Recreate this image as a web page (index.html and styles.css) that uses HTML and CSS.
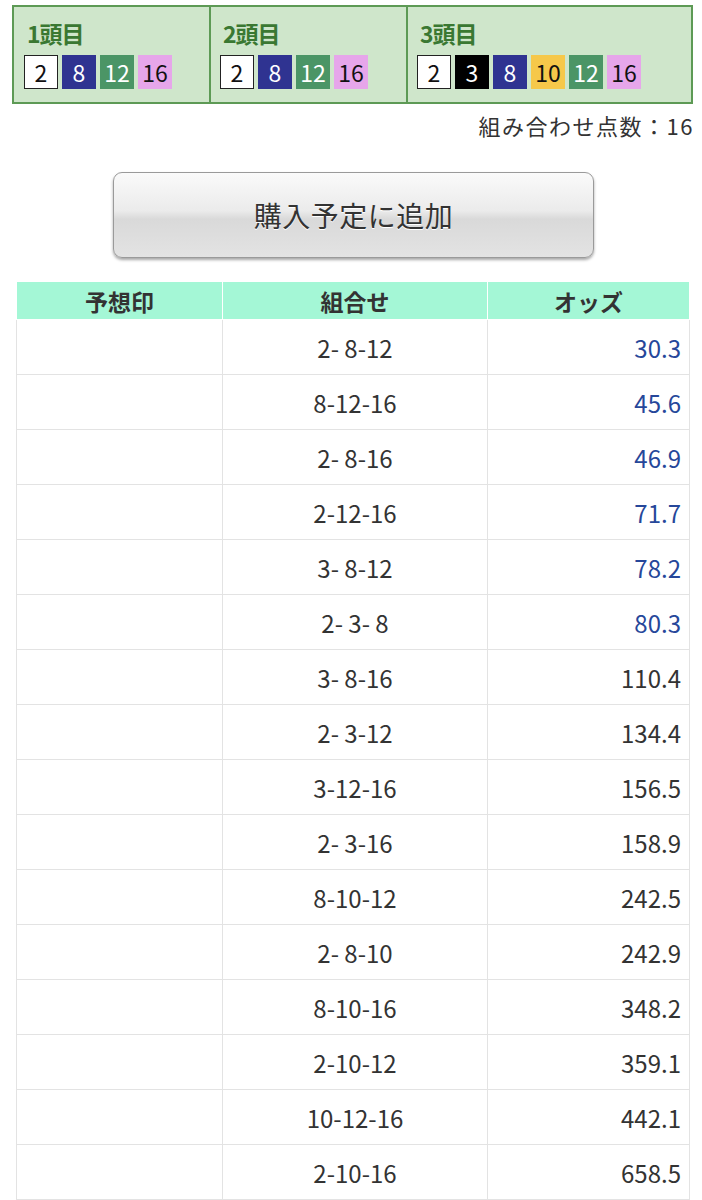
FILE: index.html
```html
<!DOCTYPE html>
<html lang="ja">
<head>
<meta charset="utf-8">
<title>組合せ</title>
<link rel="stylesheet" href="styles.css">
</head>
<body>
<div class="page">
  <div class="picks">
    <div class="pick">
      <div class="pick-title">1頭目</div>
      <div class="badges">
        <span class="b w">2</span><span class="b n">8</span><span class="b g">12</span><span class="b p">16</span>
      </div>
    </div>
    <div class="pick">
      <div class="pick-title">2頭目</div>
      <div class="badges">
        <span class="b w">2</span><span class="b n">8</span><span class="b g">12</span><span class="b p">16</span>
      </div>
    </div>
    <div class="pick">
      <div class="pick-title">3頭目</div>
      <div class="badges">
        <span class="b w">2</span><span class="b k">3</span><span class="b n">8</span><span class="b y">10</span><span class="b g">12</span><span class="b p">16</span>
      </div>
    </div>
  </div>
  <div class="count">組み合わせ点数：16</div>
  <div class="btn-wrap"><button class="btn">購入予定に追加</button></div>
  <table class="odds">
    <thead>
      <tr><th class="c1">予想印</th><th class="c2">組合せ</th><th class="c3">オッズ</th></tr>
    </thead>
    <tbody>
      <tr><td></td><td class="combo">2- 8-12</td><td class="num blue">30.3</td></tr>
      <tr><td></td><td class="combo">8-12-16</td><td class="num blue">45.6</td></tr>
      <tr><td></td><td class="combo">2- 8-16</td><td class="num blue">46.9</td></tr>
      <tr><td></td><td class="combo">2-12-16</td><td class="num blue">71.7</td></tr>
      <tr><td></td><td class="combo">3- 8-12</td><td class="num blue">78.2</td></tr>
      <tr><td></td><td class="combo">2- 3- 8</td><td class="num blue">80.3</td></tr>
      <tr><td></td><td class="combo">3- 8-16</td><td class="num">110.4</td></tr>
      <tr><td></td><td class="combo">2- 3-12</td><td class="num">134.4</td></tr>
      <tr><td></td><td class="combo">3-12-16</td><td class="num">156.5</td></tr>
      <tr><td></td><td class="combo">2- 3-16</td><td class="num">158.9</td></tr>
      <tr><td></td><td class="combo">8-10-12</td><td class="num">242.5</td></tr>
      <tr><td></td><td class="combo">2- 8-10</td><td class="num">242.9</td></tr>
      <tr><td></td><td class="combo">8-10-16</td><td class="num">348.2</td></tr>
      <tr><td></td><td class="combo">2-10-12</td><td class="num">359.1</td></tr>
      <tr><td></td><td class="combo">10-12-16</td><td class="num">442.1</td></tr>
      <tr><td></td><td class="combo">2-10-16</td><td class="num">658.5</td></tr>
    </tbody>
  </table>
</div>
</body>
</html>
```
FILE: styles.css
```css
html, body {
  margin: 0;
  padding: 0;
  background: #fff;
}
body {
  font-family: "Noto Sans CJK JP", sans-serif;
  color: #333;
}
.page {
  padding: 5px 9px 0 12px;
}
.picks {
  display: grid;
  grid-template-columns: 195px 197px 1fr;
  background: #cfe6cb;
  border: 2px solid #5d9a55;
  height: 99px;
  box-sizing: border-box;
}
.pick {
  border-left: 2px solid #5d9a55;
  padding: 11px 0 0 9px;
}
.pick:first-child {
  border-left: none;
  padding-left: 10px;
}
.pick-title {
  font-weight: 700;
  font-size: 23px;
  line-height: 31px;
  color: #3a7832;
  letter-spacing: -1px;
  padding-left: 3px;
}
.badges {
  display: flex;
  gap: 4px;
  margin-top: 6px;
}
.b {
  display: flex;
  align-items: center;
  justify-content: center;
  width: 34px;
  height: 34px;
  box-sizing: border-box;
  font-size: 23px;
  color: #fff;
}
.b.w { background: #fff; border: 1.5px solid #222; color: #111; }
.b.k { background: #000; color: #fff; }
.b.n { background: #2f3391; color: #fff; }
.b.g { background: #4b9566; color: #fff; }
.b.p { background: #e6a6ea; color: #111; }
.b.y { background: #f6c84a; color: #111; }
.count {
  text-align: right;
  font-size: 22px;
  line-height: 30px;
  margin-top: 6px;
  letter-spacing: 1.5px;
  margin-right: -1px;
  color: #333;
}
.btn-wrap {
  display: flex;
  justify-content: center;
  margin-top: 32px;
  padding-left: 2px;
}
.btn {
  width: 481px;
  height: 86px;
  border: 1px solid #9a9a9a;
  border-radius: 9px;
  background: linear-gradient(#fafafa 0%, #ebebeb 45%, #d9d9d9 55%, #e3e3e3 100%);
  box-shadow: 0 2px 3px rgba(0,0,0,0.35);
  font-family: "Noto Sans CJK JP", sans-serif;
  font-size: 28px;
  color: #333;
  text-shadow: 0 1px 0 #fff;
  letter-spacing: 0.5px;
  padding: 0;
}
.odds {
  margin: 23px 0 0 4px;
  width: 674px;
  border-collapse: collapse;
  table-layout: fixed;
}
.odds th, .odds td {
  border: 1px solid #e3e3e3;
  padding: 0;
}
.odds th {
  background: #a4f7d6;
  height: 37px;
  font-weight: 700;
  font-size: 23px;
  color: #333;
  border-color: #fff;
}
.c1 { width: 205px; }
.c2 { width: 264px; }
.odds td {
  height: 54px;
  font-size: 24px;
}
.combo {
  text-align: center;
  white-space: pre;
}
.num {
  text-align: right;
  padding-right: 8px !important;
}
.num.blue { color: #26479a; }
```
